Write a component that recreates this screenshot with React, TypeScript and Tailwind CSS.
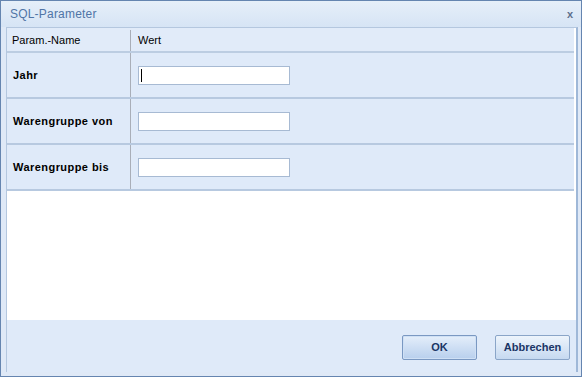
import React from "react";

const rows = [
  { label: "Jahr", focus: true },
  { label: "Warengruppe von", focus: false },
  { label: "Warengruppe bis", focus: false },
];

export default function App() {
  return (
    <div className="w-[586px] h-[381px] bg-white" style={{ fontFamily: '"Liberation Sans", Arial, sans-serif' }}>
      <div className="w-[582px] h-[377px] border border-[#6585b0] bg-[#dfe9f7] flex flex-col">
        {/* title bar */}
        <div className="h-[26px] shrink-0 flex items-center justify-between pl-[9px] pr-[8px] bg-gradient-to-b from-[#e6eff9] to-[#d6e4f5]">
          <span className="text-[12px] text-[#5075a6] tracking-[0.2px]">SQL-Parameter</span>
          <span className="text-[11px] font-bold text-[#5b6f8c] leading-none">x</span>
        </div>
        {/* body */}
        <div className="flex-1 flex flex-col pl-[5px] pr-[3px] pb-[4px]">
          <div className="flex-1 flex flex-col border-l border-t border-[#b4c7df] border-r-2 border-r-[#9fb8d8]">
            {/* grid */}
            <div className="flex-1 bg-white flex flex-col pr-[2px]">
              {/* header */}
              <div className="h-[25px] flex bg-[#e1ebf9] border-b-2 border-[#bccde2] pt-[2px]">
                <div className="w-[124px] border-r border-[#a9aeb8] flex items-center pl-[5px] text-[11px] text-black">Param.-Name</div>
                <div className="flex-1 flex items-center pl-[7px] text-[11px] text-black">Wert</div>
              </div>
              {rows.map((r) => (
                <div key={r.label} className="h-[46px] flex bg-[#dfeaf9] border-b-2 border-[#b7c9e0]">
                  <div className="w-[124px] border-r border-[#a9aeb8] flex items-center pl-[6px] pt-[1px] text-[11px] font-bold tracking-[0.45px] text-black">
                    {r.label}
                  </div>
                  <div className="flex-1 flex items-center pl-[7px]">
                    <div className="w-[152px] h-[19px] bg-white border border-[#a7bad3] flex items-center pl-[2px]">
                      {r.focus && <div className="w-[1px] h-[13px] bg-black" />}
                    </div>
                  </div>
                </div>
              ))}
            </div>
            {/* footer */}
            <div className="h-[52px] shrink-0 bg-[#dfeaf9] flex items-center justify-end gap-[18px] pr-[6px] pt-[2px]">
              <button className="w-[75px] h-[25px] rounded-[2px] border border-[#7a98c2] bg-gradient-to-b from-[#e4eefa] to-[#b8cfed] text-[11px] font-bold text-[#1a3565] shadow-[inset_0_0_0_1px_#cfe0f5]">
                OK
              </button>
              <button className="w-[75px] h-[25px] rounded-[2px] border border-[#8aa5c8] bg-gradient-to-b from-[#edf4fc] to-[#c6d9f0] text-[11px] font-bold text-[#1a3565]">
                Abbrechen
              </button>
            </div>
          </div>
        </div>
      </div>
    </div>
  );
}
